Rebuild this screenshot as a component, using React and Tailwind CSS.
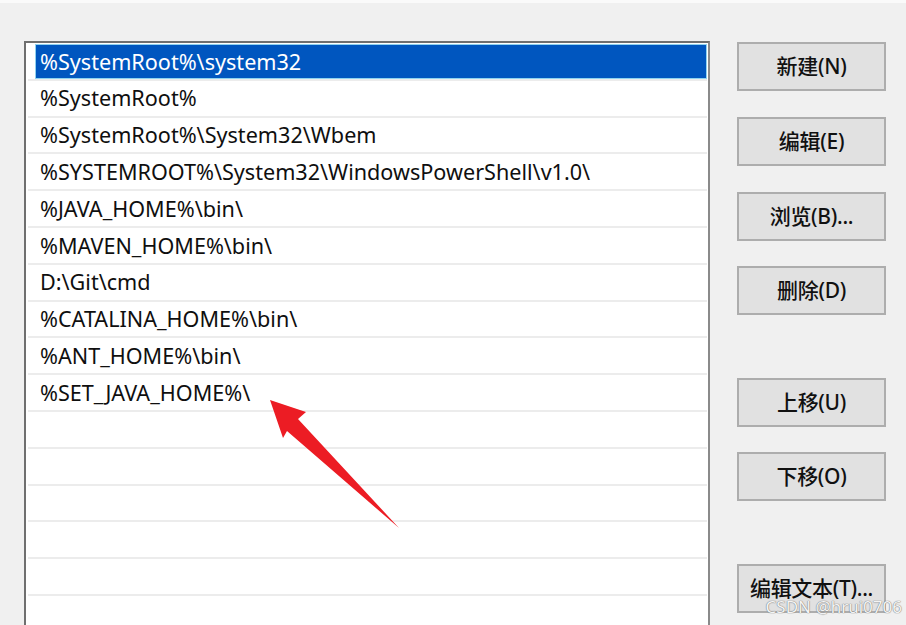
import React from 'react';

const paths = [
  '%SystemRoot%\\system32',
  '%SystemRoot%',
  '%SystemRoot%\\System32\\Wbem',
  '%SYSTEMROOT%\\System32\\WindowsPowerShell\\v1.0\\',
  '%JAVA_HOME%\\bin\\',
  '%MAVEN_HOME%\\bin\\',
  'D:\\Git\\cmd',
  '%CATALINA_HOME%\\bin\\',
  '%ANT_HOME%\\bin\\',
  '%SET_JAVA_HOME%\\',
  '',
  '',
  '',
  '',
  '',
  '',
];

const Button = ({ label, className = '' }) => (
  <div
    className={`flex h-[49px] w-[149px] items-center justify-center border-2 border-[#adadad] bg-[#e1e1e1] text-[21px] font-medium tracking-[-0.3px] text-[#111111] ${className}`}
  >
    {label}
  </div>
);

const App = () => {
  return (
    <div
      className="relative h-[625px] w-[906px] overflow-hidden border-t-[3px] border-[#fafafa] bg-[#f0f0f0]"
      style={{ fontFamily: '"Noto Sans", "Noto Sans CJK SC", sans-serif' }}
    >
      <div className="flex pl-[24px] pt-[38px]">
        {/* path list */}
        <div className="h-[600px] w-[686px] border-2 border-[#6f6f6f] border-r-[#8a8a8a] bg-white pl-[2px] pr-[1px] pt-[1px]">
          {paths.map((p, i) => (
            <div key={i} className="flex h-[36.8px] items-center border-b-2 border-[#ececec]">
              {i === 0 ? (
                <div className="ml-[7px] flex h-full flex-1 items-center border border-[#8fd3f0] bg-[#0056bf] pl-[4px] text-[21.6px] leading-none text-white">
                  {p}
                </div>
              ) : (
                <div className="pl-[12px] text-[21.6px] leading-none text-[#0f0f0f]">{p}</div>
              )}
            </div>
          ))}
        </div>

        {/* action buttons */}
        <div className="ml-[27px] flex flex-col">
          <Button label="新建(N)" className="mt-[1px]" />
          <Button label="编辑(E)" className="mt-[26px]" />
          <Button label="浏览(B)..." className="mt-[26px]" />
          <Button label="删除(D)" className="mt-[25px]" />
          <Button label="上移(U)" className="mt-[63px]" />
          <Button label="下移(O)" className="mt-[25px]" />
          <Button label="编辑文本(T)..." className="mt-[63px]" />
        </div>
      </div>

      {/* red arrow annotation */}
      <svg className="absolute left-0 top-[-3px]" width="906" height="625" viewBox="0 0 906 625">
        <polygon
          points="270,400 306,412 298,419 399,528 287,431 283,438"
          fill="#ec1c24"
        />
      </svg>

      {/* watermark */}
      <div
        className="absolute bottom-[6px] right-[4px] text-[17px] text-[#f4f4f4]"
        style={{ textShadow: '0 0 1px #777, 0 0 1px #777' }}
      >
        CSDN @hrui0706
      </div>
    </div>
  );
};

export default App;
